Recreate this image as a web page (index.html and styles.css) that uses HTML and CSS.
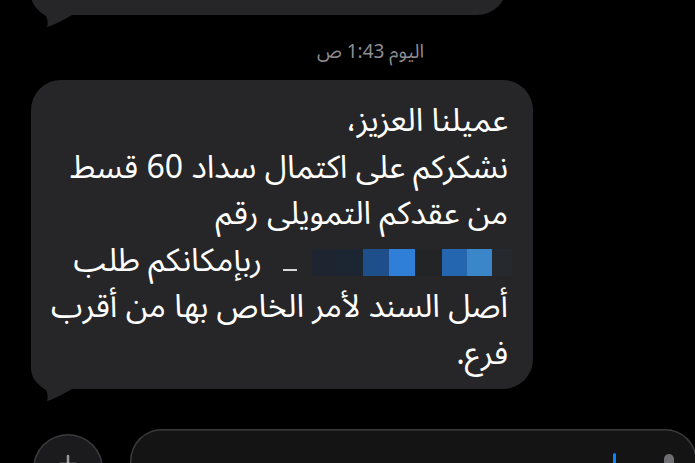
FILE: index.html
```html
<!DOCTYPE html>
<html lang="ar">
<head>
<meta charset="utf-8">
<link rel="stylesheet" href="styles.css">
</head>
<body>
<div class="thread">
  <div class="bubble bubble-prev">
    <svg class="tail" width="50" height="50" viewBox="0 0 50 50"><path d="M0,0 L0,15 C0,27 9,33 15,37 C17,41 17,45 16,48 C27,45 37,37 49,33 L49,0 Z" fill="#262628"/></svg>
  </div>
  <div class="stamp" dir="rtl">اليوم 1:43 ص</div>
  <div class="bubble bubble-main">
    <div class="msg" dir="rtl">
      <div class="line">عميلنا العزيز،</div>
      <div class="line">نشكركم على اكتمال سداد 60 قسط</div>
      <div class="line">من عقدكم التمويلى رقم</div>
      <div class="line line-redacted"><span class="redact"><i class="b1"></i><i class="b2"></i><i class="b3"></i><i class="b4"></i><i class="b5"></i><i class="b6"></i><i class="b7"></i><i class="b8"></i></span><span class="dash"></span><span class="tail-text">ربإمكانكم طلب</span></div>
      <div class="line">أصل السند لأمر الخاص بها من أقرب</div>
      <div class="line">فرع.</div>
    </div>
    <svg class="tail" width="50" height="50" viewBox="0 0 50 50"><path d="M0,0 L0,15 C0,27 9,33 15,37 C17,41 17,45 16,48 C27,45 37,37 49,33 L49,0 Z" fill="#262628"/></svg>
  </div>
  <div class="composer">
    <div class="plus-btn"><svg class="plus" width="20" height="20" viewBox="0 0 20 20"><path d="M10 2 V18 M2 10 H18" stroke="#9a9a9e" stroke-width="2.5" stroke-linecap="round"/></svg></div>
    <div class="field"><span class="cursor"></span><span class="mic"></span></div>
  </div>
</div>
</body>
</html>
```
FILE: styles.css
```css
html, body {
  margin: 0;
  padding: 0;
  background: #000;
  height: 463px;
  overflow: hidden;
}
.thread {
  padding-left: 31px;
  font-family: "Noto Sans Arabic", "DejaVu Sans", "Noto Sans", sans-serif;
}
.bubble {
  position: relative;
  background: #262628;
  border-radius: 30px;
}
.bubble-prev {
  width: 476px;
  height: 60px;
  margin-top: -45px;
}
.tail {
  position: absolute;
  left: 0;
  bottom: -14px;
}
.stamp {
  margin: 25px 0 0 -31px;
  padding-left: 46px;
  text-align: center;
  color: #8d8d92;
  font-size: 19px;
  line-height: 24px;
  height: 24px;
}
.bubble-main {
  margin-top: 16px;
  width: 502px;
  height: 309px;
  box-sizing: border-box;
  padding: 18px 25px 0 25px;
}
.msg {
  color: #fff;
  font-size: 32px;
  line-height: 46.5px;
}
.line {
  white-space: nowrap;
  height: 46.5px;
}
.line-redacted {
  display: flex;
  align-items: center;
}
.redact {
  display: inline-flex;
  height: 27px;
  margin-right: -4px;
  margin-top: 4px;
}
.redact i {
  display: block;
  width: 25px;
  height: 27px;
}
.redact .b1 { background: #262a2e; width: 20px; }
.redact .b2 { background: #3a86c8; }
.redact .b3 { background: #2566b0; }
.redact .b4 { background: #222426; width: 27px; }
.redact .b5 { background: #2f7fd8; width: 26px; }
.redact .b6 { background: #1f4f8a; width: 26px; }
.redact .b7 { background: #1c2633; width: 26px; }
.redact .b8 { background: #1e2530; width: 25px; }
.dash {
  display: inline-block;
  width: 14px;
  height: 2px;
  background: #d8d8d8;
  margin: 18px 15px 0 21px;
}
.tail-text {
  word-spacing: 0;
}
.composer {
  margin-top: 45px;
  margin-left: 2px;
  display: flex;
  gap: 27px;
}
.plus-btn {
  position: relative;
  flex: none;
  width: 70px;
  height: 70px;
  border-radius: 50%;
  background: #1b1b1d;
  box-shadow: inset 0 0 0 1.5px #3a3a3c;
}
.plus {
  position: absolute;
  left: 25px;
  top: 20px;
}
.field {
  position: relative;
  flex: 1;
  height: 70px;
  margin-top: -5px;
  margin-right: -2px;
  border-radius: 32px;
  background: #141415;
  box-shadow: inset 0 0 0 1.5px #3a3a3c;
}
.cursor {
  position: absolute;
  left: 483px;
  top: 24px;
  width: 3px;
  height: 30px;
  border-radius: 2px;
  background: #0a84ff;
}
.mic {
  position: absolute;
  left: 534px;
  top: 25px;
  width: 10px;
  height: 20px;
  border-radius: 5px;
  background: #6d6d72;
}
```
